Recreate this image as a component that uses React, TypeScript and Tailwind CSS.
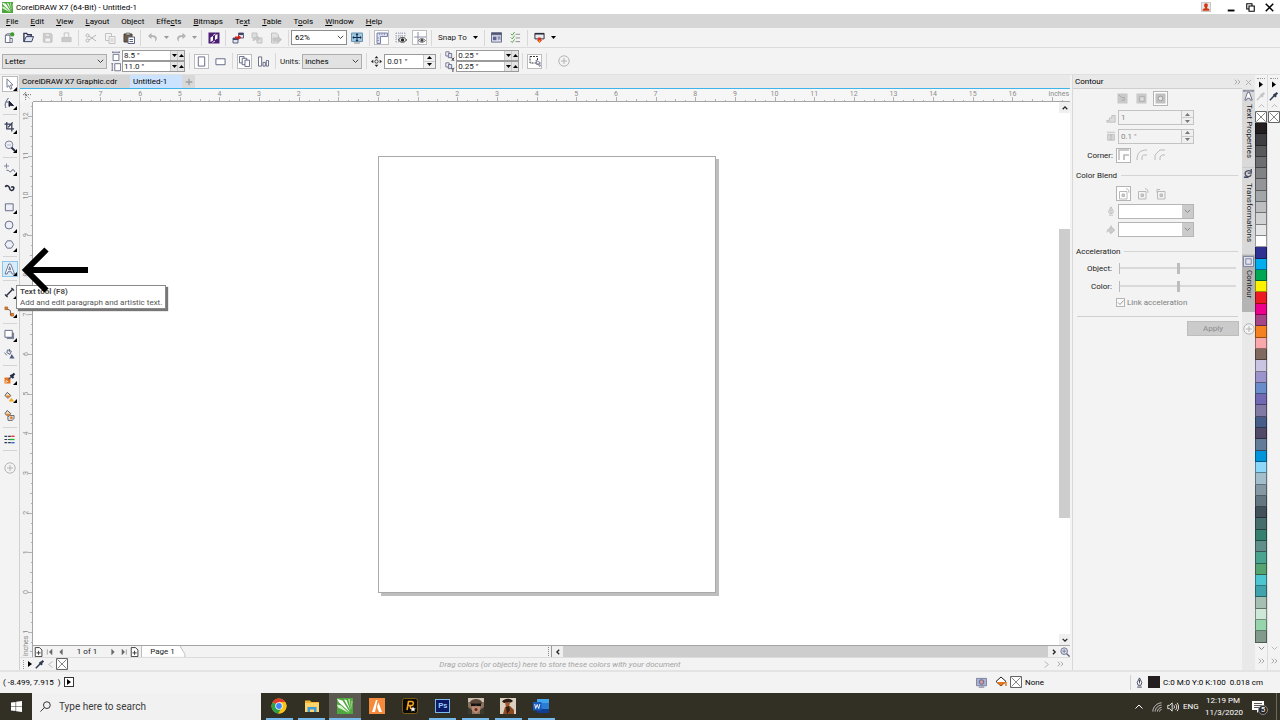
import React from "react";

type Kids = { children?: React.ReactNode };

/* ---------- icon helper ---------- */
function G({ children, s = 12, c = "" }: Kids & { s?: number; c?: string }) {
  return (
    <svg width={s} height={s} viewBox="0 0 12 12" fill="none" stroke="#5d6280" strokeWidth="1" className={"block shrink-0 " + c} aria-hidden="true">
      {children}
    </svg>
  );
}

const Caret = ({ c = "fill-black" }: { c?: string }) => (
  <svg width="5" height="3" viewBox="0 0 5 3" className={"block shrink-0 " + c} aria-hidden="true"><path d="M0 0h5L2.5 3z" /></svg>
);
const CaretUp = ({ c = "fill-black" }: { c?: string }) => (
  <svg width="5" height="3" viewBox="0 0 5 3" className={"block shrink-0 " + c} aria-hidden="true"><path d="M0 3h5L2.5 0z" /></svg>
);
const Chevron = ({ c = "stroke-[#444]" }: { c?: string }) => (
  <svg width="7" height="5" viewBox="0 0 7 5" fill="none" className={"block shrink-0 " + c} aria-hidden="true"><path d="M.8.8l2.7 2.7L6.2.8" /></svg>
);
const CorelLogo = ({ s = 11 }: { s?: number }) => (
  <svg width={s} height={s} viewBox="0 0 16 16" className="block shrink-0" aria-hidden="true">
    <path d="M0 0h16v16H0z" fill="#4fa83d" />
    <path d="M0 1l5.500 1.500L13 14.500 2 4.500z" fill="#fff" />
    <path d="M0 6.500l4 1 8 7.500L1 9.500z" fill="#d8f0cc" />
    <path d="M7 1.500l2.500.5 4 11z" fill="#fff" />
    <path d="M11.200 1l1.600 0 1 11zM14.500 2.500l1 .8-1.300 9z" fill="#b9e3a2" />
  </svg>
);
const XBox = ({ s = 12 }: { s?: number }) => (
  <svg width={s} height={s} viewBox="0 0 12 12" className="block shrink-0" fill="#fff" stroke="#666" aria-hidden="true">
    <path d="M.5.5h11v11H.5z" /><path d="M1.500 1.500l9 9M10.500 1.500l-9 9" strokeWidth=".8" />
  </svg>
);
const PlusCircle = () => (
  <G s={12}><g stroke="#b4b4b4"><circle cx="6" cy="6" r="5.200" fill="#f3f3f3" /><path d="M6 3v6M3 6h6" /></g></G>
);
const Dropper = ({ dim = false }: { dim?: boolean }) => (
  <G s={10}>
    <g stroke={dim ? "#c4c4c4" : "#2f3a52"}><path d="M1 11l5.500-5.500" strokeWidth="1.800" /><path d="M5.500 4l3 3M7.500 4.500l2.500-2.500" strokeWidth="2.600" /></g>
  </G>
);
const DoubleArrow = ({ c = "stroke-[#aaa]" }: { c?: string }) => (
  <svg width="7" height="6" viewBox="0 0 7 6" fill="none" className={"block " + c} aria-hidden="true"><path d="M.7.7L3 3 .7 5.300M3.700.7L6 3 3.700 5.300" /></svg>
);

/* ---------- title, menu ---------- */
function TitleBar() {
  return (
    <header className="flex h-[14px] shrink-0 items-center bg-white pl-[2px] pr-[6px]">
      <CorelLogo />
      <h1 className="ml-[3px] flex-1 whitespace-nowrap font-normal text-black">CorelDRAW X7 (64-Bit) - Untitled-1</h1>
      <button aria-label="Account" className="mr-4">
        <G s={10}><path d="M.5.5h11v11H.5z" fill="#e8e8e8" stroke="#bbb" /><path d="M6 1.500c3 0 2.500 4 1.300 5v1l2.700 1v2H2v-2l2.700-1v-1C3.500 5.500 3 1.500 6 1.500z" fill="#d23a16" stroke="none" /></G>
      </button>
      <button aria-label="Minimize" className="mr-[10px]"><G s={9}><path d="M1 10h9" stroke="#000" strokeWidth="2.500" /></G></button>
      <button aria-label="Restore" className="mr-[10px]"><G s={9}><g stroke="#000" strokeWidth="1.400"><path d="M1 1h7v7H1z" /><path d="M4 4h7v7H4z" fill="#fff" /></g></G></button>
      <button aria-label="Close"><G s={9}><path d="M1 1l10 10M11 1L1 11" stroke="#000" strokeWidth="2" /></G></button>
    </header>
  );
}

const menus: [string, string, string][] = [
  ["", "F", "ile"], ["", "E", "dit"], ["", "V", "iew"], ["", "L", "ayout"], ["Ob", "j", "ect"], ["Effe", "c", "ts"],
  ["", "B", "itmaps"], ["Te", "x", "t"], ["", "T", "able"], ["T", "o", "ols"], ["", "W", "indow"], ["", "H", "elp"],
];
function MenuBar() {
  return (
    <nav className="flex h-[14px] shrink-0 items-center bg-[#d6d6d6] text-black">
      {menus.map(([a, b, c]) => (
        <button key={a + b + c} className="px-[6px]">{a}<u>{b}</u>{c}</button>
      ))}
    </nav>
  );
}

/* ---------- toolbars ---------- */
const Sep = () => <div className="flex w-[5px] shrink-0 justify-center"><div className="h-4 w-px bg-[#d8d8d8]" /></div>;
function Tool({ label, on = false, children }: Kids & { label: string; on?: boolean }) {
  return (
    <div className="flex w-[19px] shrink-0 justify-center">
      <button aria-label={label} className={"flex h-[15px] w-[15px] items-center justify-center border " + (on ? "border-[#bdbdbd] bg-white" : "border-transparent")}>{children}</button>
    </div>
  );
}
const More = ({ label, dim = false }: { label: string; dim?: boolean }) => (
  <button aria-label={label} className="flex w-[9px] shrink-0 items-center justify-center"><Caret c={dim ? "fill-[#999]" : "fill-black"} /></button>
);
const gray = "#c2c2c2";

function StandardBar() {
  return (
    <div className="flex h-5 shrink-0 items-center border-b border-[#dcdcdc] bg-[#f3f3f3]">
      <Tool label="New"><G s={11}><path d="M1.500 3.500h5v8h-5zM6.500 7h2.500v4.500H5" fill="#fff" /><path d="M1.500 3.500l2-1.500h4" /><circle cx="9" cy="2.700" r="2.300" fill="#3f9a2f" stroke="none" /></G></Tool>
      <Tool label="Open"><G s={11}><path d="M1 10.500v-9h3l1 1.500h4v2" strokeWidth="1.500" stroke="#2c3356" /><path d="M1 10.500l2.500-5.500H11.500l-2 5.500z" fill="#dfe4f2" stroke="#2c3356" /></G></Tool>
      <Tool label="Save"><G s={11}><g stroke={gray}><path d="M1.500 1.500h8l1.500 1v8.500H1.500z" fill="#d0d0d0" /><path d="M3 6.500h6.500V11H3zM3.500 2h5v2.500h-5z" fill="#f3f3f3" /></g></G></Tool>
      <Tool label="Print"><G s={11}><g stroke={gray}><path d="M3.500 1h5v5h-5z" fill="#f3f3f3" /><path d="M1 6h10v4.500H1z" fill="#cbcbcb" /></g></G></Tool>
      <Sep />
      <Tool label="Cut"><G><g stroke="#b5b5b5"><circle cx="2.500" cy="3.500" r="1.500" /><circle cx="2.500" cy="8.500" r="1.500" /><path d="M4 4l7 5M4 8l7-5" /></g></G></Tool>
      <Tool label="Copy"><G><g stroke={gray} fill="#f3f3f3"><path d="M1.500 1.500h6v7h-6z" /><path d="M5 4.500h6v7H5zM6.500 7h3M6.500 9h3" /></g></G></Tool>
      <Tool label="Paste"><G><path d="M1 2h8v8H1z" fill="#6e5b45" stroke="#4c3f31" /><path d="M3 1h4v2H3z" fill="#bbb" stroke="#555" strokeWidth=".6" /><path d="M5 5h6.500v6.500H5z" fill="#fff" /><path d="M6.500 7.500h3.500M6.500 9.500h3.500" /></G></Tool>
      <Sep />
      <Tool label="Undo"><G><path d="M4.500.8L1 4l3.500 3.200V5c3 0 4.500 1 3.500 5 3.500-3.500 2-7-3.500-7z" fill="#b5b5b5" stroke="none" /></G></Tool>
      <More label="Undo list" dim />
      <Tool label="Redo"><G><path d="M7.500.8L11 4 7.500 7.200V5C4.500 5 3 6 4 10 .5 6.500 2 3 7.500 3z" fill="#b5b5b5" stroke="none" /></G></Tool>
      <More label="Redo list" dim />
      <Sep />
      <Tool label="Corel CONNECT"><G><path d="M.5.5h11v11H.5z" fill="#4d1f74" stroke="none" /><path d="M2.500 10l2.500-1.500V4L2.500 5.500zM9.500 2L7 3.500V8l2.500-1.500z" fill="#fff" stroke="none" /><path d="M5 3.500L7.500 2M4.500 10.500L7 9" stroke="#fff" strokeWidth=".9" /></G></Tool>
      <Sep />
      <Tool label="Import"><G><path d="M1 6h5v5H1zM6.500 1h5v5h-5z" fill="#dfe3ee" /><path d="M1 6h5v2H1zM7 1h4v2H7z" fill="#3d4568" stroke="none" /><path d="M3 4.500h3V2.800L9.500 5.500 6 8V6.500H3z" fill="#d22319" stroke="none" /></G></Tool>
      <Tool label="Export"><G><g stroke={gray}><path d="M1 1h5v5H1zM6 6h5v5H6z" fill="#ddd" /><path d="M2 9c0-3 2-3.500 4-3.500V4l3 2.500L6 9V7.500" fill="#c9c9c9" /></g></G></Tool>
      <Tool label="Publish to PDF"><G><g stroke={gray} fill="#e2e2e2"><path d="M1.500 1h5l2 2v8h-7z" /><path d="M3 6h5V4.500l3.500 3L8 10.500V9H3z" fill="#c6c6c6" /></g></G></Tool>
      <div className="w-px" /><Sep />
      <div className="relative w-14 shrink-0">
        <select aria-label="Zoom level" className="block h-[15px] w-full appearance-none border border-[#8c8c8c] bg-white pl-[3px] text-black"><option>62%</option></select>
        <div className="pointer-events-none absolute right-[3px] top-[5px]"><Chevron /></div>
      </div>
      <Tool label="Full-screen preview"><G><path d="M.5 1h11v8.500H.5z" fill="#9cc9e0" stroke="#6a93b3" /><path d="M3 11h6" stroke="#888" /><path d="M6 2v7M2 5.500h8" stroke="#12294c" strokeWidth="1" /><path d="M6 1l1.500 2h-3zM6 9.800L4.500 8h3zM1.300 5.500L3 4v3zM10.700 5.500L9 4v3z" fill="#12294c" stroke="none" /></G></Tool>
      <div className="w-px" /><Sep />
      <Tool label="Show rulers" on><G><path d="M1 1h10.500v3.500H4.500V11.500H1z" fill="#d9def0" stroke="#7880a5" /><path d="M3.500 1v2M6 1v2M8.500 1v2M1 6h2M1 8.500h2" stroke="#7880a5" strokeWidth=".7" /></G></Tool>
      <Tool label="Show grid"><G><path d="M1 1h10M1 4h10M1 7h4M1 10h3M1 1v10M4 1v10M7 1v3M10 1v3" stroke="#9ba0b4" strokeDasharray="1 1" /><path d="M3.500 8c2-3.500 6-3.500 8 0-2 3-6 3-8 0z" fill="#eee" stroke="#333" /><circle cx="7.500" cy="7.900" r="1.700" fill="#222" stroke="none" /></G></Tool>
      <Tool label="Show guidelines" on><G><path d="M4 0v12M0 5h12" stroke="#8a8fa6" /><path d="M4.500 8.500c1.500-2.500 5-2.500 7 0-2 2.300-5 2.300-7 0z" fill="#eee" stroke="#666" /><circle cx="8" cy="8.400" r="1.400" fill="#444" stroke="none" /></G></Tool>
      <Sep />
      <button className="flex items-center gap-[6px] whitespace-nowrap pl-[4px] pr-1">Snap To <Caret /></button>
      <Sep />
      <Tool label="Options"><G s={11}><path d="M.5 1h11v10H.5z" fill="#e6e8f2" /><path d="M.5 1h11v2H.5z" fill="#4a4f6e" /><path d="M2 5h4v4H2z" fill="#5b6390" stroke="none" /><path d="M7 4.500h3.500v5L9 8l-1.500 1.500z" fill="#8d94b5" stroke="none" /></G></Tool>
      <Tool label="Quick customize"><G s={11}><path d="M1 2l1.500 1.500L5 0M1 6l1.500 1.500L5 4M1 10l1.500 1.500L5 8" stroke="#4d9a3c" /><path d="M6 2.500h5M6 6.500h5M6 10.500h5" stroke="#888" /></G></Tool>
      <Sep />
      <Tool label="Application launcher"><G s={11}><path d="M1 1.500h10v6H1z" fill="#e7e9ee" stroke="#22262f" /><path d="M1 2h10" stroke="#22262f" strokeWidth="1.500" /><path d="M4.500 6h3v2.500H9L6 12 3 8.500h1.500z" fill="#e5281a" stroke="none" /><path d="M5 9h2l-1 3z" fill="#ffb300" stroke="none" /></G></Tool>
      <More label="Launcher list" />
    </div>
  );
}

function PairField({ label, value }: { label: string; value: string }) {
  return (
    <div className="flex h-[11px] w-[63px] border border-[#9a9a9a] bg-white">
      <input aria-label={label} defaultValue={value} className="w-0 flex-1 pl-px leading-none outline-none" />
      <button aria-label={label + " down"} className="flex w-[7px] items-center justify-center border-l border-[#c8c8c8] bg-[#e4e4e4]"><Caret /></button>
      <button aria-label={label + " up"} className="flex w-[7px] items-center justify-center border-l border-[#c8c8c8] bg-[#e4e4e4]"><CaretUp /></button>
    </div>
  );
}
function Spin({ label, value, dim = false, w }: { label: string; value: string; dim?: boolean; w: string }) {
  const cc = dim ? "fill-[#777]" : "fill-black";
  return (
    <div className={"flex h-[15px] shrink-0 border " + w + (dim ? " border-[#c3c3c3] bg-[#f3f3f3] text-[#888]" : " border-[#9a9a9a] bg-white")}>
      <input aria-label={label} defaultValue={value} className="w-0 flex-1 bg-transparent pl-[2px] outline-none" />
      <div className="flex w-3 flex-col border-l border-[#c8c8c8] bg-[#efefef]">
        <button aria-label={label + " up"} className="flex flex-1 items-center justify-center border-b border-[#ccc]"><CaretUp c={cc} /></button>
        <button aria-label={label + " down"} className="flex flex-1 items-center justify-center"><Caret c={cc} /></button>
      </div>
    </div>
  );
}
function GrayDrop({ label, value, w }: { label: string; value: string; w: string }) {
  return (
    <div className={"relative shrink-0 " + w}>
      <select aria-label={label} className="block h-[15px] w-full appearance-none border border-[#adadad] bg-[#e2e2e2] pl-[2px] text-black"><option>{value}</option></select>
      <div className="pointer-events-none absolute right-[3px] top-[5px]"><Chevron /></div>
    </div>
  );
}

function PropertyBar() {
  return (
    <div className="flex h-[27px] shrink-0 items-center border-b border-[#e0e0e0] bg-[#f3f3f3] pl-[2px]">
      <GrayDrop label="Page size" value="Letter" w="w-[105px]" />
      <div className="ml-1 mr-px flex flex-col gap-px">
        <G s={10}><path d="M2.500 4h7v7.500h-7z" fill="#fff" /><path d="M2 1.500h8M2 .5v2M10 .5v2" /></G>
        <G s={10}><path d="M4.500 2h7v8.500h-7z" fill="#fff" /><path d="M1.500 2v8M.5 2h2M.5 10h2" /></G>
      </div>
      <div className="flex flex-col"><PairField label="Page width" value={'8.5 "'} /><PairField label="Page height" value={'11.0 "'} /></div>
      <div className="w-[2px]" /><Sep />
      <Tool label="Portrait" on><G s={11}><path d="M2.500 1h7v10h-7z" fill="#fff" /></G></Tool>
      <Tool label="Landscape"><G s={11}><path d="M1 3h10v6.500H1z" fill="#fff" /></G></Tool>
      <Sep />
      <Tool label="All pages" on><G s={11}><g fill="#fff"><path d="M.5.500h5v7h-5z" /><path d="M3.500 2.500h5v7h-5z" /><path d="M6.500 4.500h5v7h-5z" /></g></G></Tool>
      <Tool label="Current page"><G s={11}><g fill="#fff"><path d="M.5 1h3.500v10H.5zM5.500 7h2.500v4H5.500zM9 5h2.500v6H9z" /></g></G></Tool>
      <Sep />
      <label className="flex shrink-0 items-center gap-[2px] pl-[2px]">Units:<GrayDrop label="Units" value="inches" w="w-[60px]" /></label>
      <div className="w-[2px]" /><Sep />
      <div className="pl-[2px] pr-[2px]"><G s={11}><path d="M6 0l2 2.500H4zM6 12L4 9.500h4zM0 6l2.500-2v4zM12 6L9.500 8V4z" fill="#222" stroke="none" /><circle cx="6" cy="6" r="1.800" stroke="#333" /></G></div>
      <Spin label="Nudge distance" value={'0.01 "'} w="w-[52px]" />
      <div className="w-[2px]" /><Sep />
      <div className="mr-px flex flex-col gap-px pl-[2px]">
        {[0, 1].map((i) => (
          <G s={10} key={i}><path d="M1 1h4v5H1z" fill="#fff" /><path d="M4 3h4v5H4z" fill="#dfe2ee" /><path d={i ? "M8 7l1.500 2L11 7M9.500 9v3" : "M8 8l3 4M11 8l-3 4"} stroke="#222" /></G>
        ))}
      </div>
      <div className="flex flex-col"><PairField label="Duplicate X" value={'0.25 "'} /><PairField label="Duplicate Y" value={'0.25 "'} /></div>
      <div className="w-px" /><Sep />
      <Tool label="Treat as filled" on><G><path d="M1 1.500h7.500V8H1z" strokeDasharray="2 1" stroke="#333" /><path d="M7 5l1 5 1-1.500 1.500 3 1-.5L10 8h1.500z" fill="#fff" strokeWidth=".8" /></G></Tool>
      <Sep />
      <div className="w-[5px]" />
      <Tool label="Customize"><PlusCircle /></Tool>
    </div>
  );
}

/* ---------- toolbox ---------- */
function TB({ label, fly = true, on = "", children }: Kids & { label: string; fly?: boolean; on?: "" | "w" | "b" }) {
  return (
    <div className="flex h-[18px] shrink-0 items-center justify-center">
      <button aria-label={label} className={"relative flex h-4 w-4 items-center justify-center border " + (on === "w" ? "border-[#bbb] bg-white" : on === "b" ? "border-[#8cc6ea] bg-[#d8ecfa]" : "border-transparent")}>
        {children}
        {fly && <svg width="4" height="4" viewBox="0 0 4 4" className="absolute bottom-0 right-0" aria-hidden="true"><path d="M4 0v4H0z" /></svg>}
      </button>
    </div>
  );
}
const HSep = () => <div className="flex h-1 shrink-0 items-center justify-center"><div className="h-px w-[14px] bg-[#d4d4d4]" /></div>;

function Toolbox() {
  return (
    <aside className="w-5 shrink-0 border-r border-[#d0d0d0] bg-[#f3f3f3]">
      <div className="flex h-[402px] flex-col justify-between">
        <TB label="Pick tool" on="w"><G><path d="M3 .8v8.500l2-1.800 1.500 3.700 1.500-.7L6.500 7H9z" fill="#fff" stroke="#777c94" /></G></TB>
        <TB label="Shape tool"><G><path d="M2 11C0 7 2 4 4.500 1M2 5h2" stroke="#555b78" /><path d="M5 4v5.500L6.500 8.300l3 .3z" fill="#1b2136" stroke="#1b2136" /></G></TB>
        <HSep />
        <TB label="Crop tool"><G s={11}><path d="M3 1v7.500h8M.5 3.500H8.500V11.500M9.500 1.500L4.500 7" stroke="#3a4059" strokeWidth="1.400" /></G></TB>
        <TB label="Zoom tool"><G><circle cx="5" cy="4.800" r="3.800" fill="#eef0f6" stroke="#7b8098" /><path d="M3 5h4" stroke="#aeb4cc" /><path d="M7.500 7.500l3.500 3.500" stroke="#272d45" strokeWidth="1.800" /></G></TB>
        <HSep />
        <TB label="Freehand tool"><G><path d="M2.500.5v5M0 3h5" stroke="#8389a5" /><path d="M2.500 8c2-3 3 3 5 0s2-1 3.500 1" stroke="#555b78" /></G></TB>
        <TB label="Artistic media" fly={false}><G s={11}><path d="M1.500 4.500c.5-2.500 4-2 4.500 1s3.500 3.500 4.500 1-1.500-3-2.500-1.500" stroke="#262b3e" strokeWidth="1.700" /></G></TB>
        <TB label="Rectangle tool"><G s={11}><path d="M1.500 2h8.500v7.500H1.500z" fill="#eef0f8" /></G></TB>
        <TB label="Ellipse tool"><G s={11}><circle cx="5.500" cy="5.500" r="4.300" fill="#eef0f8" /></G></TB>
        <TB label="Polygon tool"><G s={11}><path d="M3.500 2h4.500l2.500 4L8 10H3.500L1 6z" fill="#eef0f8" /></G></TB>
        <HSep />
        <TB label="Text tool" on="b"><G><path d="M1 11L4.700 1h2L10.500 11H8.200L7.400 8.700H4L3.200 11zM4.700 6.800h2L5.700 3.700z" fill="#fff" stroke="#4e5a80" strokeWidth=".8" /></G></TB>
        <HSep />
        <TB label="Parallel dimension"><G s={11}><path d="M2 10l8-8" stroke="#272d45" strokeWidth="1.500" /><path d="M1 8l3 3M8 1l3 3" stroke="#272d45" strokeWidth="1.300" /></G></TB>
        <TB label="Connector tool"><G s={11}><path d="M3 3l4 2v5h2" stroke="#555" /><path d="M1 1h3v3H1zM7.500 8h3v3h-3z" fill="#e8801f" stroke="#9b4d13" strokeWidth=".6" /></G></TB>
        <HSep />
        <TB label="Drop shadow"><G s={11}><path d="M3 4h8v7H3z" fill="#7d84a0" stroke="none" /><path d="M1 1.500h8V9H1z" fill="#fff" /></G></TB>
        <TB label="Transparency" fly={false}><G s={11}><path d="M4 2l4 1.500L6.500 7 3 5z" fill="#dfe3ee" /><path d="M6 1v3M.5 5L3 8" /><path d="M6 11.500l2.500-5 3 5z" fill="#4d5d80" stroke="none" /></G></TB>
        <HSep />
        <TB label="Color eyedropper"><G><path d="M.5 5.500h6v6h-6z" fill="#e8761a" stroke="none" /><path d="M2 8l2 2M1 10h2" stroke="#fff" strokeWidth=".7" /><path d="M4.500 7.500L8 4" stroke="#555b78" strokeWidth="1.500" /><path d="M6.500 3l3 3M8 4l2.500-2.500" stroke="#20263e" strokeWidth="2.200" /></G></TB>
        <TB label="Interactive fill"><G s={11}><path d="M3.500 1.500L7.500 5 4.500 8 1 5z" fill="#efe2cf" stroke="#555" /><path d="M2 5h5L4.500 8z" fill="#e8801f" stroke="none" /><path d="M5.500 11.500c0-2 2-2.500 2.500-4.500.5 2 3 2.500 3 4.500z" fill="#f2a827" stroke="none" /></G></TB>
        <TB label="Smart fill" fly={false}><G s={11}><path d="M3.500.5L7.500 4 4.500 7 1 4z" fill="#efe2cf" stroke="#555" /><path d="M2 4h5L4.500 7z" fill="#e8801f" stroke="none" /><path d="M4 8l2-2h5v3l-2 2.500H4.500z" fill="#d7dae6" stroke="#666" /><circle cx="8" cy="8.500" r="1.500" fill="#e8801f" stroke="none" /></G></TB>
        <HSep />
        <TB label="Outline pen" fly={false}><G s={11}><path d="M.5 2.500h7M.5 6h7M.5 9.500h7" stroke="#333a50" strokeDasharray="3 1" strokeWidth="1.300" /><path d="M8 2.500h3.500" stroke="#e22" strokeWidth="1.400" /><path d="M6 6h5.500" stroke="#1fb32a" strokeWidth="1.400" /><path d="M8 9.500h3.500" stroke="#2255e0" strokeWidth="1.400" /></G></TB>
        <HSep />
        <div className="h-1 shrink-0" />
        <TB label="Add tools" fly={false}><PlusCircle /></TB>
      </div>
    </aside>
  );
}

/* ---------- rulers ---------- */
const INCH = 39.65;
function HRuler() {
  const zero = 345;
  const marks = Array.from({ length: 107 }, (_, k) => k - 35).map((q) => ({ q, x: zero + (q * INCH) / 4 }));
  return (
    <svg className="h-full w-0 flex-1 overflow-hidden bg-[#f6f6f6]" aria-hidden="true">
      {marks.map(({ q, x }) => (
        <path key={q} d={`M${Math.round(x) + 0.5} 12v${q % 4 === 0 ? -4 : q % 2 === 0 ? -2 : -1}`} stroke="#b2b2b2" />
      ))}
      {marks.filter(({ q }) => q % 4 === 0 && q < 68).map(({ q, x }) => (
        <text key={q} x={x} y="7" textAnchor="middle" fontSize="7" fill="#8c8c8c">{Math.abs(q / 4)}</text>
      ))}
      <text x="100%" dx="-1" y="7" textAnchor="end" fontSize="7" fill="#8c8c8c">inches</text>
    </svg>
  );
}
function VRuler() {
  const zero = 490;
  const marks = Array.from({ length: 56 }, (_, k) => k - 6).map((q) => ({ q, y: zero - (q * INCH) / 4 }));
  return (
    <svg className="w-3 flex-1 overflow-hidden bg-[#f2f2f2]" aria-hidden="true">
      {marks.map(({ q, y }) => (
        <path key={q} d={`M12 ${Math.round(y) + 0.5}h${q % 4 === 0 ? -4 : q % 2 === 0 ? -2 : -1}`} stroke="#b2b2b2" />
      ))}
      {marks.filter(({ q }) => q % 4 === 0).map(({ q, y }) => (
        <text key={q} transform={`translate(8 ${y}) rotate(-90)`} textAnchor="middle" fontSize="7" fill="#8c8c8c">{Math.abs(q / 4)}</text>
      ))}
      <text transform="translate(8 554) rotate(-90)" fontSize="7" fill="#8c8c8c">inches</text>
    </svg>
  );
}

/* ---------- document ---------- */
function NavIcon({ label, d, w = "w-[11px]" }: { label: string; d: string; w?: string }) {
  return <button aria-label={label} className={"flex shrink-0 justify-center " + w}><G s={8}><path d={d} fill="#666" stroke="#666" strokeWidth=".8" /></G></button>;
}
const AddPage = ({ label }: { label: string }) => (
  <button aria-label={label} className="flex w-[11px] shrink-0 justify-center"><G s={10}><path d="M1.500.7h5L9.500 3.500v8h-8z" fill="#fff" stroke="#222" /><path d="M5.500 4.500v5M3 7h5" stroke="#222" /></G></button>
);
const Bar = ({ d, label }: { d: string; label: string }) => (
  <button aria-label={label} className="flex h-[11px] w-[11px] shrink-0 items-center justify-center bg-[#f0f0f0]"><svg width="6" height="6" viewBox="0 0 6 6" fill="none" stroke="#222" strokeWidth="1.300" className="block"><path d={d} /></svg></button>
);

function Document() {
  return (
    <main className="flex min-w-0 flex-1 flex-col pr-[2px]">
      <div role="tablist" className="flex h-[13px] shrink-0 bg-[#e9e9e9] text-black">
        <button role="tab" className="w-[110px] bg-[#d4d4d4] pl-[2px] text-left">CorelDRAW X7 Graphic.cdr</button>
        <button role="tab" className="w-[52px] bg-[#cce3ff] pl-[3px] text-left">Untitled-1</button>
        <button aria-label="New document" className="flex w-[13px] items-center justify-center bg-[#d9d9d9]"><G s={8}><path d="M6 1v10M1 6h10" stroke="#a0a0a0" strokeWidth="2" /></G></button>
      </div>
      <div className="h-px shrink-0 bg-[#3db5ea]" />
      <div className="flex h-[13px] shrink-0 bg-[#f6f6f6]">
        <div className="flex w-[13px] items-center justify-center"><G s={8}><path d="M4 0v12M0 4h12M2 2l8 8" stroke="#333" strokeDasharray="2 1.500" /></G></div>
        <div className="flex min-w-0 flex-1 border-b border-[#a5a5a5]"><HRuler /></div>
      </div>
      <div className="flex min-h-0 flex-1">
        <div className="flex w-[13px] shrink-0 flex-col border-r border-[#a5a5a5]"><VRuler /></div>
        <div className="flex min-w-0 flex-1 flex-col">
          <div className="flex min-h-0 flex-1 border-b border-[#a5a5a5] bg-white">
            <div className="relative flex-1 overflow-hidden">
              <div className="absolute left-[345px] top-[54px] h-[437px] w-[338px] border border-[#aaa] bg-white shadow-[3px_3px_0_#bebebe]" />
            </div>
            <div className="flex w-[11px] shrink-0 flex-col">
              <Bar label="Scroll up" d="M.7 4.200L3 1.900l2.300 2.300" />
              <div className="basis-[116px]" />
              <div className="flex-1 bg-[#cdcdcd]" />
              <div className="basis-[116px]" />
              <Bar label="Scroll down" d="M.7 1.900L3 4.200l2.300-2.300" />
            </div>
          </div>
          <div className="flex h-[11px] shrink-0 items-center bg-[#f3f3f3]">
            <AddPage label="Add page before" />
            <NavIcon label="First page" d="M2 2v8M9 2v8L5 6z" />
            <NavIcon label="Previous page" d="M8 2v8L4 6z" w="w-[12px]" />
            <span className="w-[40px] shrink-0 text-center leading-[11px]">1 of 1</span>
            <NavIcon label="Next page" d="M4 2v8l4-4z" />
            <NavIcon label="Last page" d="M3 2v8l4-4zM9.500 2v8" />
            <AddPage label="Add page after" />
            <button className="relative -mt-px ml-px h-[11px] w-[45px] shrink-0">
              <svg className="absolute inset-0" width="45" height="11" viewBox="0 0 45 11" aria-hidden="true"><path d="M.5 0v10.500h43.500c0-4-1-4-5-10.500z" fill="#fff" /><path d="M.5 0v11M44 11c0-4-1-4-5-11" fill="none" stroke="#bbb" /></svg>
              <span className="relative block pr-[2px] leading-[11px]">Page 1</span>
            </button>
            <div className="flex-1" />
            <div className="mr-[2px] h-[9px] border-l border-dotted border-[#888]" />
            <div className="h-full w-px bg-[#999]" />
            <div className="flex basis-[518px] items-center">
              <Bar label="Scroll left" d="M4.200.7L1.900 3l2.300 2.300" />
              <div className="h-[11px] flex-1 bg-[#cdcdcd]" />
              <Bar label="Scroll right" d="M1.900.7L4.200 3 1.900 5.300" />
              <button aria-label="Navigator" className="flex w-[11px] justify-center"><G s={10}><circle cx="5" cy="5" r="4" fill="#dde1ee" /><path d="M8 8l3.500 3.500" strokeWidth="1.600" /><path d="M5 2.500v5M2.500 5h5" strokeWidth=".8" /></G></button>
            </div>
          </div>
        </div>
      </div>
      <div className="flex h-[13px] shrink-0 items-center border-t border-[#dcdcdc] bg-[#f3f3f3]">
        <div className="ml-[3px] h-[9px] border-l border-dotted border-[#999]" />
        <svg width="4" height="6" viewBox="0 0 4 6" className="ml-1"><path d="M0 0v6l4-3z" /></svg>
        <div className="ml-[3px]"><Dropper /></div>
        <svg width="5" height="7" viewBox="0 0 5 7" fill="none" stroke="#bbb" className="ml-[3px]"><path d="M4.500.5l-4 3 4 3" /></svg>
        <button aria-label="No color" className="ml-[3px]"><XBox /></button>
        <p className="flex-1 pl-2 text-center italic text-[#a3a3a3]">Drag colors (or objects) here to store these colors with your document</p>
        <svg width="5" height="7" viewBox="0 0 5 7" fill="none" stroke="#bbb" className="mr-2"><path d="M.5.5l4 3-4 3" /></svg>
        <div className="mr-[6px]"><DoubleArrow /></div>
      </div>
    </main>
  );
}

/* ---------- docker ---------- */
function IconBox({ label, on = false, children }: Kids & { label: string; on?: boolean }) {
  return <button aria-label={label} className={"flex h-[15px] w-[15px] shrink-0 items-center justify-center border " + (on ? "border-[#b5b5b5] bg-white" : "border-transparent")}>{children}</button>;
}
function Heading({ children }: Kids) {
  return <div className="mr-1 flex h-5 items-center gap-1 pl-[3px]"><h2 className="whitespace-nowrap">{children}</h2><div className="h-px flex-1 bg-[#d4d4d4]" /></div>;
}
function ColorDrop({ label }: { label: string }) {
  return (
    <div className="relative w-[76px]">
      <select aria-label={label} className="block h-[15px] w-full appearance-none border border-[#b5b5b5] bg-white"><option></option></select>
      <div className="pointer-events-none absolute right-px top-px flex h-[13px] w-[11px] items-center justify-center bg-[#cbcbcb]"><Chevron c="stroke-[#888]" /></div>
    </div>
  );
}
function SliderRow({ label, id }: { label: string; id: string }) {
  return (
    <>
      <label htmlFor={id} className="w-[39px] text-right">{label}</label>
      <input id={id} type="range" defaultValue={50} className="ml-[7px] mr-[6px] h-[11px] w-0 flex-1 appearance-none border-l border-[#bbb] bg-[linear-gradient(#d9d9d9,#d9d9d9)] bg-[length:100%_2px] bg-center bg-no-repeat [&::-webkit-slider-thumb]:h-[11px] [&::-webkit-slider-thumb]:w-[3px] [&::-webkit-slider-thumb]:appearance-none [&::-webkit-slider-thumb]:bg-[#bdbdbd]" />
    </>
  );
}
const d = "#b9b9b9";

function Docker() {
  return (
    <section className="flex w-[170px] shrink-0 flex-col border-l border-[#d8d8d8] bg-[#f3f3f3]">
      <div className="flex h-[14px] shrink-0 items-center border-b border-[#cfcfcf] bg-[#e9e9e9] pl-[2px]">
        <h2 className="flex-1 text-black">Contour</h2>
      </div>
      <div className="flex h-[19px] items-center gap-1 pl-[42px]">
        <IconBox label="To center"><G s={11}><path d="M.5.5h11v11H.5z" fill="#c9c9c9" stroke="none" /><path d="M2 2l3 3h3v3H5" stroke="#aaa" /></G></IconBox>
        <IconBox label="Inside contour"><G s={11}><path d="M.5.5h11v11H.5z" fill="#c9c9c9" stroke="none" /><path d="M4 4h5v5H4z" fill="#ddd" stroke="#aaa" /></G></IconBox>
        <IconBox label="Outside contour" on><G s={11}><path d="M.5.5h11v11H.5z" fill="#c0c0c0" stroke="none" /><circle cx="6" cy="6" r="2.500" fill="#e5e5e5" stroke="#999" /></G></IconBox>
      </div>
      <div className="flex h-[19px] items-center gap-[2px] pl-[33px]"><G s={10}><path d="M1 11V9h3V6h3V3h4v8z" fill="#ddd" stroke={d} /></G><Spin label="Contour steps" value="1" dim w="w-[76px]" /></div>
      <div className="flex h-[18px] items-center gap-[2px] pl-[33px]"><G s={10}><path d="M1 1.500h10M2 4h8v7H2zM5 5h2v5H5z" fill="#ddd" stroke={d} /></G><Spin label="Contour offset" value={'0.1 "'} dim w="w-[76px]" /></div>
      <div className="flex h-5 items-center gap-[3px]">
        <span className="w-10 text-right">Corner:</span>
        <IconBox label="Mitered corners" on><G><path d="M1 11V1h10" stroke={d} strokeWidth="1.400" /><path d="M6 11V6h5" stroke={d} strokeWidth="1.600" /></G></IconBox>
        <IconBox label="Round corners"><G><path d="M1 11C1 4 4 1 11 1M6 11V8c0-1 1-2 2-2h3" stroke={d} /></G></IconBox>
        <IconBox label="Bevel corners"><G><path d="M1 11V6l5-5h5M6 11V8l2-2h3" stroke={d} /></G></IconBox>
      </div>
      <Heading>Color Blend</Heading>
      <div className="flex h-[17px] items-center gap-1 pl-[43px]">
        {["Linear color", "Clockwise color", "Counterclockwise color"].map((n, i) => (
          <IconBox key={n} label={n} on={i === 0}><G><path d="M1.500 3.500h7.500V11H1.500z" stroke={d} /><path d="M4 6h2.500v2.500H4z" fill="#ccc" stroke={d} /><path d={i === 2 ? "M4 1.500H1v3" : "M8 .8c2 0 3 1 3 4"} stroke={d} /></G></IconBox>
        ))}
      </div>
      <div className="flex h-[18px] items-center gap-[2px] pl-[33px]"><G s={10}><path d="M6 1l3 6-1.500 2h-3L3 7zM3.500 11h5M6 4v4" fill="#e2e2e2" stroke={d} /></G><ColorDrop label="Outline color" /></div>
      <div className="flex h-[19px] items-center gap-[2px] pl-[33px]"><G s={10}><path d="M6 2l4.500 4L6 10.500 2 6z" fill="#ccc" stroke={d} /><path d="M2 6L1 9M6 0v4" stroke={d} /></G><ColorDrop label="Fill color" /></div>
      <div className="h-[2px]" />
      <Heading>Acceleration</Heading>
      <div className="flex h-[14px] items-center"><SliderRow label="Object:" id="acc-object" /></div>
      <div className="flex h-[22px] items-center"><SliderRow label="Color:" id="acc-color" /></div>
      <label className="flex h-[11px] items-center gap-[2px] pl-[43px] text-[#808080]">
        <span className="relative flex h-[9px] w-[9px]">
          <input type="checkbox" defaultChecked className="h-[9px] w-[9px] appearance-none border border-[#b5b5b5] bg-[#f9f9f9]" />
          <svg className="pointer-events-none absolute inset-0" width="9" height="9" viewBox="0 0 9 9" fill="none" stroke="#999"><path d="M2 4.500l2 2 3.500-4" /></svg>
        </span>
        Link acceleration
      </label>
      <div className="mx-1 mt-2 border-t border-[#cfcfcf]" />
      <button className="ml-auto mr-[3px] mt-1 h-[15px] w-[52px] border border-[#bdbdbd] bg-[#cbcbcb] text-[#8a8a8a]">Apply</button>
    </section>
  );
}

function DockTab({ label, on = false, h, children }: Kids & { label: string; on?: boolean; h: string }) {
  return (
    <button role="tab" className={"flex flex-col items-center gap-[3px] pt-px " + h + (on ? " bg-[#b4b4b4]" : " border-b border-[#cacaca] bg-[#d9d9d9]")}>
      {children}
      <span className="leading-3 [writing-mode:vertical-rl]">{label}</span>
    </button>
  );
}
function DockTabs() {
  return (
    <div className="flex w-[13px] shrink-0 flex-col bg-[#e9e9e9]">
      <div className="flex h-[14px] shrink-0 items-center justify-end gap-1">
        <button aria-label="Collapse docker" className="shrink-0"><DoubleArrow /></button>
        <button aria-label="Close docker" className="mr-[3px] shrink-0"><G s={7}><path d="M1.500 1.500l9 9M10.500 1.500l-9 9" stroke="#aaa" strokeWidth="1.500" /></G></button>
      </div>
      <DockTab label="Text Properties" h="h-[79px]"><G s={11}><path d="M1 1h10M1 0v2M11 0v2" /><path d="M2 11L5 2.500h2L10 11H8l-.7-2H4.700L4 11z" fill="#fff" /></G></DockTab>
      <DockTab label="Transformations" h="h-[87px]"><G s={11}><path d="M8.500 2.500C5 .5 1.500 3 2.500 6S8 9 9 6M9 0v4.500H5M1 9h5" stroke="#454b63" strokeWidth="1.400" /></G></DockTab>
      <DockTab label="Contour" on h="h-[57px]"><G s={11}><path d="M.5.5h11v11H.5z" fill="#dfe2ee" stroke="#777d99" /><path d="M3 3h6v6H3z" stroke="#777d99" /></G></DockTab>
      <div className="mt-[11px] flex justify-center"><PlusCircle /></div>
    </div>
  );
}

/* ---------- palettes ---------- */
const swatches = [
  "#231f20", "#3f3f41", "#58595b", "#6d6e71", "#808285", "#939598", "#a1a6a9", "#bcbec0", "#d1d3d4", "#e6e7e8", "#ffffff",
  "#2e3192", "#00aeef", "#00a651", "#fff200", "#ed1c24", "#ec008c", "#a54686", "#f58220", "#f9a8ac", "#806a60", "#c9c4e2",
  "#9b94cc", "#6a8cca", "#7269b5", "#807aa5", "#465d89", "#504a68", "#627b99", "#0095da", "#8dd8f8", "#a3bfcc", "#8499a4",
  "#647680", "#42505a", "#466d6c", "#34806f", "#5f8e8b", "#4aa38f", "#54a370", "#4fc6cf", "#41a3ab", "#a5bfb2", "#cde8d7",
  "#96d4ab", "#829a8c",
];
function Palette({ colors, dim = false }: { colors: string[]; dim?: boolean }) {
  return (
    <div className="flex w-3 shrink-0 flex-col items-center bg-[#f3f3f3]">
      <div className="mt-[3px] w-2 border-t border-dotted border-[#999]" />
      <svg width="4" height="7" viewBox="0 0 4 6" className="mt-[2px] block"><path d="M0 0v6l4-3z" /></svg>
      <div className="mt-[3px]"><Dropper dim={dim} /></div>
      <div className="mt-[2px] rotate-180"><Chevron c="stroke-[#bbb]" /></div>
      <button aria-label="No color" className="mt-[3px]"><XBox /></button>
      <div className="flex min-h-0 w-full flex-1 flex-col">
        {colors.map((c, i) => (
          <button key={i} aria-label={"Color " + c} className="min-h-0 w-full flex-1 border-x border-b border-black/40" style={{ backgroundColor: c }} />
        ))}
      </div>
      <div className="mt-[3px]"><Chevron c={dim ? "stroke-[#888]" : "stroke-[#bbb]"} /></div>
      <div className="mb-[6px] mt-[7px]"><DoubleArrow /></div>
    </div>
  );
}

/* ---------- status ---------- */
function StatusBar() {
  return (
    <footer className="flex h-[23px] shrink-0 items-center border-t-2 border-[#e3e3e3] bg-[#f3f3f3] pb-px pl-[3px] text-black">
      <span className="whitespace-pre">( -8.499, 7.915  )</span>
      <button aria-label="Status menu" className="ml-[4px] flex h-[10px] w-[10px] items-center justify-center border border-[#333] bg-white"><svg width="4" height="6" viewBox="0 0 4 6"><path d="M0 0v6l4-3z" /></svg></button>
      <div className="flex-1" />
      <G s={11}><path d="M.5 1.500h11v8H.5z" fill="#aab3d2" stroke="#7a7f9a" /><circle cx="6" cy="5.500" r="2.500" fill="#e4938a" stroke="#4b6fa0" /><path d="M3 11h6" /></G>
      <div className="ml-2 flex w-[101px] items-center gap-[3px]">
        <G s={12}><path d="M6 1l5 4.500L6 10 1 5.500z" fill="#fff" stroke="#222" /><path d="M1.500 6h9L6 10z" fill="#e8761a" stroke="none" /><path d="M11 6v4" stroke="#e8761a" strokeWidth="1.500" /></G>
        <XBox /><span>None</span>
      </div>
      <div className="ml-[34px] h-[15px] w-px bg-[#d0d0d0]" />
      <div className="flex items-center gap-[3px] pl-[3px] pr-[17px]">
        <G s={11}><path d="M6 1l2.500 5-1 3h-3l-1-3zM3.500 11h5M6 3v4" fill="#fff" stroke="#333a50" /></G>
        <div className="h-3 w-3 bg-[#231f20]" />
        <span className="whitespace-pre">C:0 M:0 Y:0 K:100  0.018 cm</span>
      </div>
    </footer>
  );
}

/* ---------- taskbar ---------- */
function App9({ label, run = false, on = false, children }: Kids & { label: string; run?: boolean; on?: boolean }) {
  return (
    <button aria-label={label} className={"flex h-full w-8 flex-col items-center justify-between pt-[5px] " + (on ? "bg-[#5a5850]" : "")}>
      <span className="flex h-4 shrink-0 items-center">{children}</span>
      <span className={"h-[2px] shrink-0 " + (on ? "w-full bg-[#76b9ed]" : run ? "w-[27px] bg-[#76b9ed]" : "w-0")} />
    </button>
  );
}
const S = ({ children }: Kids) => <svg width="16" height="16" viewBox="0 0 16 16" className="block" aria-hidden="true">{children}</svg>;

function Taskbar() {
  return (
    <div className="flex h-[27px] shrink-0 bg-[#322f25] text-white">
      <button aria-label="Start" className="flex w-8 shrink-0 items-center justify-center">
        <svg width="11" height="11" viewBox="0 0 12 12" fill="#fff"><path d="M0 1.700L5 1v4.700H0zM5.600.9L12 0v5.700H5.600zM0 6.300h5V11l-5-.7zM5.600 6.300H12V12l-6.400-.9z" /></svg>
      </button>
      <label className="flex w-[229px] shrink-0 items-center bg-[#f1f1f1] pl-2">
        <svg width="11" height="11" viewBox="0 0 12 12" fill="none" stroke="#222"><circle cx="7.500" cy="4.500" r="3.700" /><path d="M4.800 7.200L.5 11.500" /></svg>
        <input aria-label="Search" placeholder="Type here to search" className="ml-2 w-0 flex-1 bg-transparent text-[10px] text-black outline-none placeholder:text-[#3a3a3a]" />
      </label>
      <nav className="flex w-[296px] shrink-0 justify-between pl-[2px]">
        <App9 label="Chrome" run><S>
          <circle cx="8" cy="8" r="7.500" fill="#fbc116" /><path d="M8 8L1.500 4.200A7.500 7.500 0 0 1 14.500 4.300H8z" fill="#e33b2e" /><path d="M8 8L1.500 4.200A7.500 7.500 0 0 0 7.300 15.500L11 9.500z" fill="#2c9f4b" /><path d="M8 4.300h6.500A7.500 7.500 0 0 1 7.300 15.500L11 9.500z" fill="#fbc116" /><circle cx="8" cy="8" r="3.700" fill="#fff" /><circle cx="8" cy="8" r="2.900" fill="#4285f4" />
        </S></App9>
        <App9 label="File Explorer" run><S><path d="M1 2.500h5l1.500 1.500H15v9H1z" fill="#f2b632" /><path d="M1 5h14v9H1z" fill="#fcd56a" /><path d="M3.500 14V9h9v5h-2.500v-2.500H6V14z" fill="#3f9bdc" /></S></App9>
        <App9 label="CorelDRAW" on><CorelLogo s={16} /></App9>
        <App9 label="FiveM"><S><path d="M0 0h16v16H0z" fill="#f68a3c" /><path d="M3 14L7 2h1.500L6 14zM9.500 4.500L13 14h-3L8 9z" fill="#fff" /></S></App9>
        <App9 label="Rockstar Games"><S><rect x=".5" y=".5" width="15" height="15" rx="2" fill="#0c0a05" stroke="#7d5a12" /><path d="M5 12l1.500-8.500h3c3 0 2 4 0 4H6M8 8l1 3" stroke="#f7a51c" strokeWidth="1.600" fill="none" /><path d="M11 8.500l.8 1.700 1.900.2-1.400 1.300.4 1.900-1.700-1-1.700 1 .4-1.900-1.400-1.300 1.900-.2z" fill="#fff" /></S></App9>
        <App9 label="Photoshop" run><span className="flex h-[14px] w-[15px] items-center justify-center border border-[#7cb8ec] bg-[#0d1a66] text-[8px] font-semibold leading-none text-[#9bd0ff]">Ps</span></App9>
        <App9 label="Game" run><S><path d="M0 0h16v16H0z" fill="#8d7260" /><path d="M0 0h16v4H0z" fill="#cdbfb0" /><path d="M2 4c2-4 10-4 12 0v2H2z" fill="#5b483b" /><path d="M3 5.500h4.500l.5 1 .5-1H13v2.500H9L8 7.500 7 8H3z" fill="#151210" /><path d="M4 8.500h8v4l-4 3-4-3z" fill="#c08a72" /><circle cx="8" cy="11.500" r="1.500" fill="#5a2a22" /><path d="M0 9l4 3v4H0zM16 9l-4 3v4h4z" fill="#3a3b2e" /></S></App9>
        <App9 label="Viewer" run><S><path d="M0 0h16v16H0z" fill="#dccfc0" /><path d="M2 3.500C5 0 10 0 13 3L11 4.500 4 5z" fill="#2a1c15" /><path d="M5 4.500h5L9 9H6z" fill="#a0572e" /><path d="M3 16l2-7 5-1 4 4v4z" fill="#8f4a20" /><path d="M6 9l3-1 1 4-3 4z" fill="#2b1d17" /></S></App9>
        <App9 label="Word" run><S><path d="M4 1h12v14H4z" fill="#2b7cd3" /><path d="M4 1h12v4H4z" fill="#41a5ee" /><path d="M4 11h12v4H4z" fill="#103f91" /><path d="M0 4h8.500v8.500H0z" fill="#185abd" /><path d="M1.700 6l1 4.500L4.200 6.500l1.500 4L6.800 6" stroke="#fff" fill="none" strokeWidth=".9" /></S></App9>
      </nav>
      <div className="flex-1" />
      <div className="flex shrink-0 items-center">
        <svg width="8" height="5" viewBox="0 0 8 5" fill="none" stroke="#fff" className="mr-[9px]"><path d="M.5 4.500L4 1l3.500 3.500" /></svg>
        <svg width="10" height="10" viewBox="0 0 12 12" fill="none" stroke="#ddd" className="mr-[5px]"><path d="M1 11.500C1 6 6 1 11.500 1M3.800 11.500c0-4 3.700-7.700 7.700-7.700M6.500 11.500c0-2.500 2.500-5 5-5M9 11.500c0-1.200 1.300-2.500 2.500-2.500" /></svg>
        <svg width="12" height="10" viewBox="0 0 14 12" fill="none" stroke="#fff" className="mr-1"><path d="M.7 4H3l3-3v10L3 8H.7zM8 4c1 1 1 3 0 4M10 2.500c2 2 2 5 0 7M12 1c2.300 3 2.300 7 0 10" /></svg>
        <span className="w-[16px]">ENG</span>
        <div className="mx-[6px] w-[36px] whitespace-nowrap text-center leading-3"><div>12:19 PM</div><div>11/3/2020</div></div>
        <button aria-label="Notifications" className="relative ml-[5px] mr-3">
          <svg width="12" height="12" viewBox="0 0 12 12" className="block"><path d="M0 0h12v9H7.500L5 12V9H0z" fill="#fff" /><path d="M2 2.500h8M2 4.500h8M2 6.500h6" stroke="#322f25" strokeWidth=".8" /></svg>
          <span className="absolute left-[6px] top-[4px] flex h-[10px] w-[10px] items-center justify-center rounded-full border border-[#888] bg-[#252525] leading-none">5</span>
        </button>
        <div className="mr-[3px] h-[27px] w-px bg-[#6a685f]" />
      </div>
    </div>
  );
}

/* ---------- overlays ---------- */
function Tooltip() {
  return (
    <div role="tooltip" className="absolute left-4 top-[285px] z-10 whitespace-nowrap border border-[#8a8a8a] bg-white pl-[3px] pr-[3px] leading-[11px] text-[#555] shadow-[2px_2px_1px_#777]">
      <strong className="block font-semibold text-[#444]">Text tool (F8)</strong>
      Add and edit paragraph and artistic text.
    </div>
  );
}
const Pointer = () => (
  <svg className="pointer-events-none absolute left-[20px] top-[244px] z-20" width="72" height="52" viewBox="0 0 72 52" aria-hidden="true">
    <path d="M68 26H6M26.500 5.500L6 26l20.500 20.500" fill="none" stroke="#000" strokeWidth="6" />
  </svg>
);

export default function App() {
  return (
    <div className="relative flex h-screen w-full flex-col overflow-hidden bg-[#f3f3f3] font-['Roboto','Noto_Sans',sans-serif] text-[8px] leading-[13px] text-[#1a1a1a]">
      <TitleBar />
      <MenuBar />
      <StandardBar />
      <PropertyBar />
      <div className="flex min-h-0 flex-1">
        <Toolbox />
        <Document />
        <Docker />
        <DockTabs />
        <Palette colors={swatches} dim />
        <div className="w-px bg-[#ddd]" />
        <Palette colors={[]} />
      </div>
      <StatusBar />
      <Taskbar />
      <Tooltip />
      <Pointer />
    </div>
  );
}
